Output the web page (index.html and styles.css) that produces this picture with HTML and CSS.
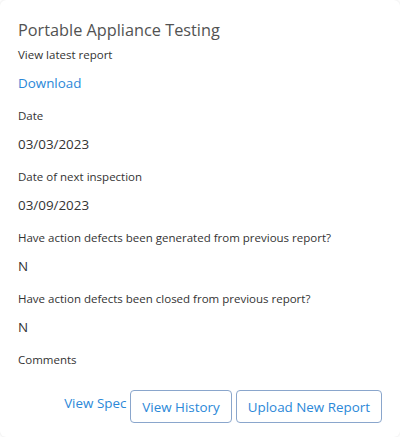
FILE: index.html
```html
<!DOCTYPE html>
<html lang="en">
<head>
<meta charset="utf-8">
<title>Portable Appliance Testing</title>
<link rel="stylesheet" href="styles.css">
</head>
<body>
<div class="card">
  <h2 class="title">Portable Appliance Testing</h2>
  <div class="field">
    <div class="label">View latest report</div>
    <a class="value link" href="#">Download</a>
  </div>
  <div class="field">
    <div class="label">Date</div>
    <div class="value">03/03/2023</div>
  </div>
  <div class="field">
    <div class="label">Date of next inspection</div>
    <div class="value">03/09/2023</div>
  </div>
  <div class="field">
    <div class="label">Have action defects been generated from previous report?</div>
    <div class="value">N</div>
  </div>
  <div class="field">
    <div class="label">Have action defects been closed from previous report?</div>
    <div class="value">N</div>
  </div>
  <div class="field">
    <div class="label">Comments</div>
  </div>
  <div class="actions">
    <a class="text-btn" href="#">View Spec</a>
    <button class="btn" type="button">View History</button>
    <button class="btn" type="button">Upload New Report</button>
  </div>
</div>
</body>
</html>
```

FILE: styles.css
```css
html, body {
  margin: 0;
  padding: 0;
  background: #ffffff;
}
body {
  font-family: "Open Sans", "Noto Sans", sans-serif;
  color: #333333;
}
.card {
  box-sizing: border-box;
  width: 400px;
  height: 437px;
  padding: 19px 18px 14px;
  background: #ffffff;
  border-radius: 6px;
  box-shadow: 0 0 3px rgba(0, 0, 0, 0.12);
  display: flex;
  flex-direction: column;
}
.title {
  margin: 0 0 5px;
  font-size: 16.3px;
  line-height: 22px;
  font-weight: 400;
  color: #525252;
}
.field {
  display: flex;
  flex-direction: column;
  align-items: flex-start;
  gap: 9px;
  margin-bottom: 14px;
}
.label {
  font-size: 11.5px;
  line-height: 18px;
  color: #333333;
}
.value {
  font-size: 13.4px;
  line-height: 20px;
  color: #333333;
}
.link {
  color: #2b88d8;
  text-decoration: none;
}
.actions {
  display: flex;
  justify-content: flex-end;
  align-items: flex-start;
  gap: 4px;
  margin-top: 7px;
}
.text-btn {
  font-size: 13.4px;
  line-height: 20px;
  padding-top: 3px;
  color: #2b88d8;
  text-decoration: none;
}
.btn {
  font-family: inherit;
  font-size: 13.4px;
  line-height: 20px;
  height: 33px;
  padding: 5px 11px 4px;
  color: #2b88d8;
  background: #ffffff;
  border: 1px solid #8aa6cc;
  border-radius: 4px;
}
```
